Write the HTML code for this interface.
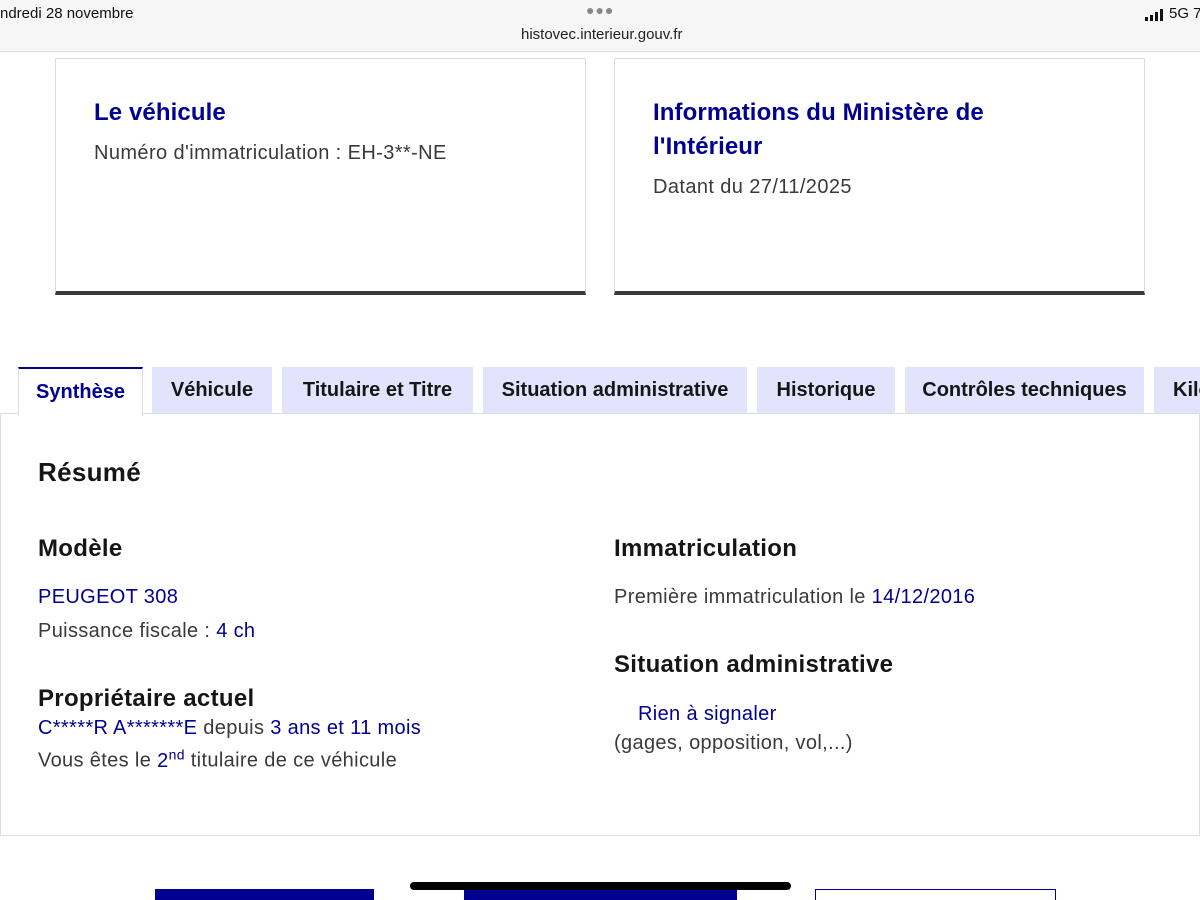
<!DOCTYPE html>
<html><head><meta charset="utf-8"><style>
*{margin:0;padding:0;box-sizing:border-box}
body{width:1200px;height:900px;overflow:hidden;background:#fff;font-family:"Liberation Sans","DejaVu Sans",sans-serif;color:#3a3a3a;position:relative}
.a{position:absolute;white-space:nowrap}
.top{position:absolute;left:0;top:0;width:1200px;height:52px;background:#f6f6f6;border-bottom:1px solid #ddd}
.card{position:absolute;top:58px;width:531px;height:237px;border:1px solid #ddd;border-bottom:4px solid #3a3a3a}
.ct{font-size:24px;font-weight:bold;color:#000091;line-height:34px;letter-spacing:0.1px}
.cs{font-size:20px;color:#3a3a3a;letter-spacing:0.4px}
.tab{position:absolute;top:367px;height:46px;background:#e3e3fd;color:#161616;font-weight:bold;font-size:20px;display:flex;align-items:center;justify-content:center}
.blue{color:#000091}
h3{font-size:24px;color:#161616;letter-spacing:0.3px}
.t{font-size:20px;letter-spacing:0.35px}
</style></head><body>
<div class="top"></div>
<div class="a" style="left:0;top:5px;font-size:15px;color:#111">ndredi 28 novembre</div>
<div class="a" style="left:586px;top:2px;font-size:14px;color:#888;letter-spacing:1px">●●●</div>
<div class="a" style="left:521px;top:26px;font-size:15px;color:#222">histovec.interieur.gouv.fr</div>
<div class="a" style="left:1145px;top:9px;width:20px;height:12px">
<div style="position:absolute;left:0;bottom:0;width:3px;height:4px;background:#111"></div>
<div style="position:absolute;left:5px;bottom:0;width:3px;height:6px;background:#111"></div>
<div style="position:absolute;left:10px;bottom:0;width:3px;height:9px;background:#111"></div>
<div style="position:absolute;left:15px;bottom:0;width:3px;height:12px;background:#111"></div></div>
<div class="a" style="left:1169px;top:5px;font-size:15px;color:#111">5G 7</div>

<div class="card" style="left:55px"></div>
<div class="a ct" style="left:94px;top:96px">Le véhicule</div>
<div class="a cs" style="left:94px;top:142px">Numéro d'immatriculation : EH-3**-NE</div>
<div class="card" style="left:614px"></div>
<div class="a ct" style="left:653px;top:96px">Informations du Ministère de<br>l'Intérieur</div>
<div class="a cs" style="left:653px;top:176px">Datant du 27/11/2025</div>

<div style="position:absolute;left:0;top:413px;width:1200px;height:423px;border:1px solid #ddd"></div>
<div class="tab" style="left:18px;width:125px;height:49px;background:#fff;border:1px solid #ddd;border-top:2px solid #000091;border-bottom:none;color:#000091">Synthèse</div>
<div class="tab" style="left:152px;width:120px">Véhicule</div>
<div class="tab" style="left:282px;width:191px">Titulaire et Titre</div>
<div class="tab" style="left:483px;width:264px">Situation administrative</div>
<div class="tab" style="left:757px;width:138px">Historique</div>
<div class="tab" style="left:905px;width:239px">Contrôles techniques</div>
<div class="tab" style="left:1154px;width:60px;justify-content:flex-start;padding-left:19px">Kilo</div>

<h3 class="a" style="left:38px;top:457px;font-size:26px">Résumé</h3>
<h3 class="a" style="left:38px;top:535px">Modèle</h3>
<div class="a t blue" style="left:38px;top:586px">PEUGEOT 308</div>
<div class="a t" style="left:38px;top:620px">Puissance fiscale : <span class="blue">4 ch</span></div>
<h3 class="a" style="left:38px;top:685px">Propriétaire actuel</h3>
<div class="a t" style="left:38px;top:717px"><span class="blue">C*****R A*******E</span> depuis <span class="blue">3 ans et 11 mois</span></div>
<div class="a t" style="left:38px;top:746px">Vous êtes le <span class="blue">2<sup style="font-size:14px">nd</sup></span> titulaire de ce véhicule</div>

<h3 class="a" style="left:614px;top:535px">Immatriculation</h3>
<div class="a t" style="left:614px;top:586px">Première immatriculation le <span class="blue">14/12/2016</span></div>
<h3 class="a" style="left:614px;top:651px">Situation administrative</h3>
<div class="a t blue" style="left:638px;top:703px">Rien à signaler</div>
<div class="a t" style="left:614px;top:732px">(gages, opposition, vol,...)</div>

<div class="a" style="left:155px;top:889px;width:219px;height:11px;background:#000091"></div>
<div class="a" style="left:464px;top:889px;width:273px;height:11px;background:#000091"></div>
<div class="a" style="left:815px;top:889px;width:241px;height:11px;border:1px solid #000091;border-bottom:none"></div>
<div class="a" style="left:410px;top:882px;width:381px;height:8px;background:#000;border-radius:4px"></div>
</body></html>
